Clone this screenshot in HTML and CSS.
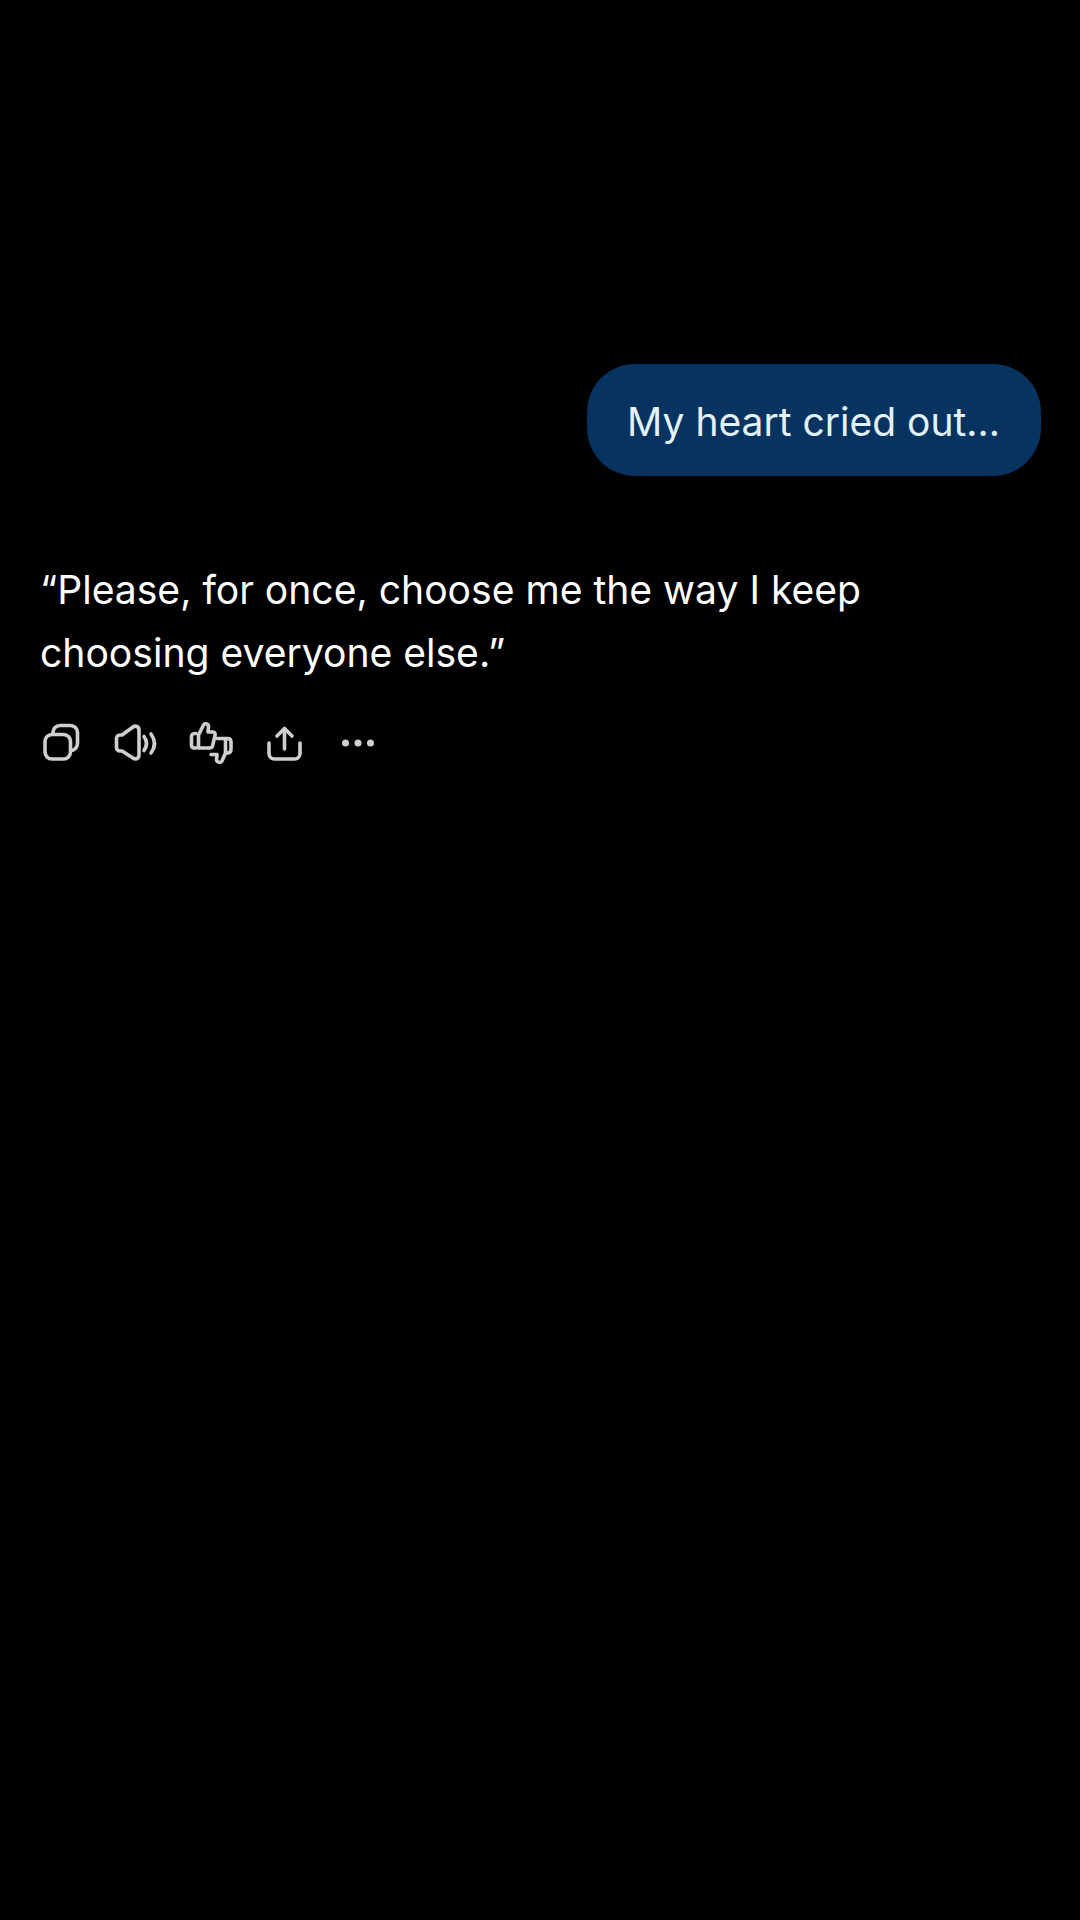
FILE: index.html
```html
<!DOCTYPE html>
<html lang="en">
<head>
<meta charset="utf-8">
<title>Chat</title>
<link rel="stylesheet" href="styles.css">
</head>
<body>
<main class="chat">
  <div class="user-row"><div class="bubble">My heart cried out...</div></div>
  <p class="reply">“Please, for once, choose me the way I keep choosing everyone else.”</p>
  <div class="actions">
    <svg class="icon" viewBox="0 0 44 44"><rect x="5" y="13.5" width="25.500" height="24.500" rx="7"/><path d="M13 13V11.500a7 7 0 0 1 7-7H30.500a7 7 0 0 1 7 7V22.500a7 7 0 0 1-7 7"/></svg>
    <svg class="icon" viewBox="0 0 44 44"><path d="M6 14H8L19 6C21.500 4.200 25 5.500 25 9V34C25 37.500 21.500 38.800 19 37L8 30H6C4 30 2.500 28.500 2.500 26.500V17.500C2.500 15.500 4 14 6 14Z"/><path d="M30 15.500Q35 22.500 30 29.500"/><path d="M37 13Q44 22.500 37 32"/></svg>
    <svg class="icon" viewBox="0 0 44 44"><path d="M10.500 14 15.500 4C16.500 2 20 2.500 20.500 5L20 11H25C27 11 27.500 13 27 14.500L24.500 25C24 26.500 23 27 21.500 27H10.500Z"/><path d="M8 12.500H6.500C4.500 12.500 3.500 14 3.500 15.500V24C3.500 26 4.500 27 6.500 27H8"/><path d="M29 17.500H37.500V32L34 40C33 42 29 41.500 28.500 39L29 33.500H23"/><path d="M37.500 17.500H39.500C42 17.500 43 19 43 21V28C43 30.500 42 32 39.500 32H37.500"/></svg>
    <svg class="icon" viewBox="0 0 44 44"><path d="M22.500 28V8"/><path d="M15 15 22.500 7.500 30 15"/><path d="M7 22V32.500A5.500 5.500 0 0 0 12.500 38H32.500A5.500 5.500 0 0 0 38 32.500V22"/></svg>
    <svg class="icon icon-solid" viewBox="0 0 44 44"><circle cx="9.500" cy="22" r="3.500"/><circle cx="22" cy="22" r="3.500"/><circle cx="34.500" cy="22" r="3.500"/></svg>
  </div>
</main>
</body>
</html>
```

FILE: styles.css
```css
html, body {
  margin: 0;
  background: #000;
}
body {
  width: 1080px;
  height: 1920px;
  overflow: hidden;
  font-family: Inter, "Liberation Sans", sans-serif;
}
.chat {
  display: flex;
  flex-direction: column;
  padding: 364px 39px 0 40px;
}
.user-row {
  display: flex;
  justify-content: flex-end;
}
.bubble {
  display: flex;
  align-items: center;
  box-sizing: border-box;
  height: 112px;
  padding: 2px 41px 0 40px;
  border-radius: 48px;
  background: #06335f;
  color: #e3f2ff;
  font-size: 39px;
}
.reply {
  margin: 82px 0 0;
  max-width: 900px;
  color: #fff;
  font-size: 39.100px;
  line-height: 63px;
}
.actions {
  display: flex;
  gap: 30px;
  margin-top: 37px;
}
.icon {
  width: 44px;
  height: 44px;
  overflow: visible;
  fill: none;
  stroke: #cfcfcf;
  stroke-width: 3.600;
  stroke-linecap: round;
  stroke-linejoin: round;
}
.icon-solid {
  fill: #cfcfcf;
  stroke: none;
}
```
